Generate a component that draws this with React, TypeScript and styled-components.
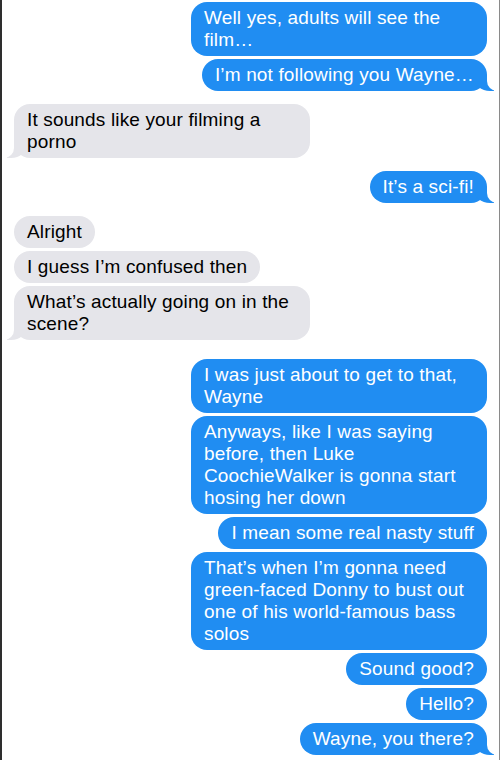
import React from "react";
import styled, { createGlobalStyle, css } from "styled-components";

const GlobalStyle = createGlobalStyle`
  html, body {
    margin: 0;
    padding: 0;
    background: #ffffff;
  }
`;

const BLUE = "#208df2";
const GRAY = "#e5e5ea";

const Screen = styled.div`
  width: 500px;
  height: 760px;
  box-sizing: border-box;
  overflow: hidden;
  border-left: 2px solid #2e2e2e;
  border-right: 1px solid #8a8a8a;
  padding: 2px 12px 0 12px;
  display: flex;
  flex-direction: column;
  background: #ffffff;
  font-family: "Liberation Sans", Arial, sans-serif;
`;

const Group = styled.div<{ $mine: boolean; $spaced?: boolean }>`
  display: flex;
  flex-direction: column;
  align-items: ${(p) => (p.$mine ? "flex-end" : "flex-start")};
  gap: 3px;
  margin-bottom: ${(p) => (p.$spaced ? "19px" : "13px")};
`;

const Bubble = styled.div<{ $mine: boolean; $tail?: boolean }>`
  position: relative;
  max-width: 296px;
  box-sizing: border-box;
  padding: 5px 13px;
  border-radius: 16px;
  font-size: 19px;
  line-height: 22px;
  letter-spacing: 0.15px;
  background: ${(p) => (p.$mine ? BLUE : GRAY)};
  color: ${(p) => (p.$mine ? "#ffffff" : "#000000")};

  ${(p) =>
    p.$tail &&
    (p.$mine
      ? css`
          &::before {
            content: "";
            position: absolute;
            bottom: 0;
            right: -7px;
            width: 20px;
            height: 16px;
            background: ${BLUE};
            border-bottom-left-radius: 16px 14px;
          }
          &::after {
            content: "";
            position: absolute;
            bottom: 0;
            right: -12px;
            width: 12px;
            height: 16px;
            background: #ffffff;
            border-bottom-left-radius: 10px;
          }
        `
      : css`
          &::before {
            content: "";
            position: absolute;
            bottom: 0;
            left: -7px;
            width: 20px;
            height: 16px;
            background: ${GRAY};
            border-bottom-right-radius: 16px 14px;
          }
          &::after {
            content: "";
            position: absolute;
            bottom: 0;
            left: -12px;
            width: 12px;
            height: 16px;
            background: #ffffff;
            border-bottom-right-radius: 10px;
          }
        `)}
`;

const Text = styled.span`
  position: relative;
  z-index: 1;
`;

interface Thread {
  mine: boolean;
  spaced?: boolean;
  lines: string[];
}

const threads: Thread[] = [
  {
    mine: true,
    lines: ["Well yes, adults will see the film…", "I’m not following you Wayne…"],
  },
  { mine: false, lines: ["It sounds like your filming a porno"] },
  { mine: true, lines: ["It’s a sci-fi!"] },
  {
    mine: false,
    spaced: true,
    lines: [
      "Alright",
      "I guess I’m confused then",
      "What’s actually going on in the scene?",
    ],
  },
  {
    mine: true,
    lines: [
      "I was just about to get to that, Wayne",
      "Anyways, like I was saying before, then Luke CoochieWalker is gonna start hosing her down",
      "I mean some real nasty stuff",
      "That’s when I’m gonna need green-faced Donny to bust out one of his world-famous bass solos",
      "Sound good?",
      "Hello?",
      "Wayne, you there?",
    ],
  },
];

const App: React.FC = () => {
  return (
    <>
      <GlobalStyle />
      <Screen>
        {threads.map((t, i) => (
          <Group key={i} $mine={t.mine} $spaced={t.spaced}>
            {t.lines.map((line, j) => (
              <Bubble key={j} $mine={t.mine} $tail={j === t.lines.length - 1}>
                <Text>{line}</Text>
              </Bubble>
            ))}
          </Group>
        ))}
      </Screen>
    </>
  );
};

export default App;
